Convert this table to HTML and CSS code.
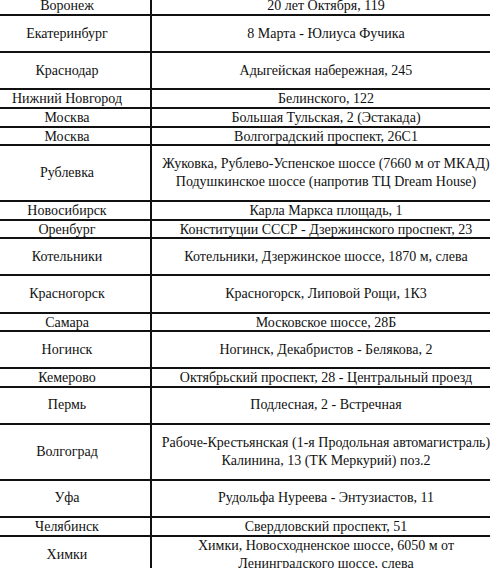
FILE: index.html
```html
<!DOCTYPE html>
<html lang="ru">
<head>
<meta charset="utf-8">
<title>Адреса</title>
<link rel="stylesheet" href="styles.css">
</head>
<body>
<div class="table">
  <div class="row h1"><div class="cell city">Воронеж</div><div class="cell addr">20 лет Октября, 119</div></div>
  <div class="row h2"><div class="cell city">Екатеринбург</div><div class="cell addr">8 Марта - Юлиуса Фучика</div></div>
  <div class="row h2"><div class="cell city">Краснодар</div><div class="cell addr">Адыгейская набережная, 245</div></div>
  <div class="row h1"><div class="cell city">Нижний Новгород</div><div class="cell addr">Белинского, 122</div></div>
  <div class="row h1"><div class="cell city">Москва</div><div class="cell addr">Большая Тульская, 2 (Эстакада)</div></div>
  <div class="row h1"><div class="cell city">Москва</div><div class="cell addr">Волгоградский проспект, 26С1</div></div>
  <div class="row h3"><div class="cell city">Рублевка</div><div class="cell addr">Жуковка, Рублево-Успенское шоссе (7660 м от МКАД)<br>Подушкинское шоссе (напротив ТЦ Dream House)</div></div>
  <div class="row h1"><div class="cell city">Новосибирск</div><div class="cell addr">Карла Маркса площадь, 1</div></div>
  <div class="row h1"><div class="cell city">Оренбург</div><div class="cell addr">Конституции СССР - Дзержинского проспект, 23</div></div>
  <div class="row h2"><div class="cell city">Котельники</div><div class="cell addr">Котельники, Дзержинское шоссе, 1870 м, слева</div></div>
  <div class="row h2"><div class="cell city">Красногорск</div><div class="cell addr">Красногорск, Липовой Рощи, 1К3</div></div>
  <div class="row h1"><div class="cell city">Самара</div><div class="cell addr">Московское шоссе, 28Б</div></div>
  <div class="row h2"><div class="cell city">Ногинск</div><div class="cell addr">Ногинск, Декабристов - Белякова, 2</div></div>
  <div class="row h1"><div class="cell city">Кемерово</div><div class="cell addr">Октябрьский проспект, 28 - Центральный проезд</div></div>
  <div class="row h2"><div class="cell city">Пермь</div><div class="cell addr">Подлесная, 2 - Встречная</div></div>
  <div class="row h3"><div class="cell city">Волгоград</div><div class="cell addr">Рабоче-Крестьянская (1-я Продольная автомагистраль)<br>Калинина, 13 (ТК Меркурий) поз.2</div></div>
  <div class="row h2"><div class="cell city">Уфа</div><div class="cell addr">Рудольфа Нуреева - Энтузиастов, 11</div></div>
  <div class="row h1"><div class="cell city">Челябинск</div><div class="cell addr">Свердловский проспект, 51</div></div>
  <div class="row h2"><div class="cell city">Химки</div><div class="cell addr">Химки, Новосходненское шоссе, 6050 м от<br>Ленинградского шоссе, слева</div></div>
</div>
</body>
</html>
```
FILE: styles.css
```css
html, body {
  margin: 0;
  padding: 0;
  background: #fff;
  overflow: hidden;
}
body {
  font-family: "Liberation Serif", "Times New Roman", serif;
  font-size: 14px;
  color: #111;
}
.table {
  width: 516px;
  margin-left: -16px;
  margin-top: -2.6px;
}
.row {
  display: grid;
  grid-template-columns: 168px 1fr;
  box-sizing: border-box;
  border-bottom: 2px solid #111;
}
.h1 { height: 18.6px; }
.h2 { height: 37.2px; }
.h3 { height: 55.8px; }
.cell {
  display: flex;
  align-items: center;
  justify-content: center;
  text-align: center;
  line-height: 18px;
  white-space: nowrap;
}
.city {
  border-right: 2px solid #111;
}
```
